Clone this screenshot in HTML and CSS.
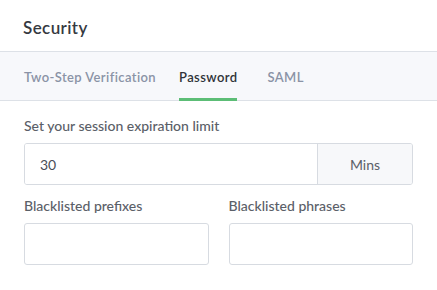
FILE: index.html
```html
<!DOCTYPE html>
<html>
<head>
<meta charset="utf-8">
<link rel="stylesheet" href="styles.css">
</head>
<body>
<div class="page">
  <div class="header"><h1 class="title">Security</h1></div>
  <div class="tabs">
    <div class="tab">Two-Step Verification</div>
    <div class="tab active">Password</div>
    <div class="tab saml">SAML</div>
  </div>
  <div class="content">
    <div class="field">
      <label class="label">Set your session expiration limit</label>
      <div class="input-group">
        <div class="input main">30</div>
        <div class="addon">Mins</div>
      </div>
    </div>
    <div class="row">
      <div class="field">
        <label class="label">Blacklisted prefixes</label>
        <div class="input"></div>
      </div>
      <div class="field">
        <label class="label">Blacklisted phrases</label>
        <div class="input"></div>
      </div>
    </div>
  </div>
</div>
</body>
</html>
```
FILE: styles.css
```css
* { box-sizing: border-box; }
body {
  margin: 0;
  background: #fff;
  font-family: Lato, "Open Sans", sans-serif;
  color: #33373d;
}
.header {
  height: 52px;
  border-bottom: 1px solid #dde1e7;
  padding-left: 23px;
  display: flex;
  align-items: center;
}
.title {
  margin: 3px 0 0 0;
  font-size: 17px;
  font-weight: 600;
  letter-spacing: 0.4px;
  color: #35393f;
}
.tabs {
  height: 49px;
  background: #f7f8fb;
  border-bottom: 1px solid #dde1e7;
  display: flex;
  gap: 23px;
  padding-left: 24px;
}
.tab {
  display: flex;
  align-items: center;
  font-size: 13px;
  font-weight: 600;
  letter-spacing: 0.4px;
  color: #8a93a6;
  border-bottom: 3px solid transparent;
  margin-bottom: -1px;
  padding-top: 3px;
}
.tab.saml { margin-left: 7px; }
.tab.active {
  color: #2f3338;
  border-bottom-color: #5cbd76;
}
.content {
  padding: 17px 24px 0 24px;
  display: flex;
  flex-direction: column;
  gap: 13px;
}
.field {
  display: flex;
  flex-direction: column;
  gap: 9px;
  flex: 1;
}
.label {
  font-size: 14px;
  font-weight: 500;
  color: #5b6068;
  line-height: 16px;
}
.input-group {
  display: flex;
  height: 42px;
  border: 1px solid #d7dbe1;
  border-radius: 3px;
  overflow: hidden;
}
.input {
  height: 42px;
  border: 1px solid #d7dbe1;
  border-radius: 3px;
  font-size: 14px;
  color: #4a4f57;
  padding-left: 15px;
  display: flex;
  align-items: center;
  background: #fff;
}
.input.main {
  flex: 1;
  border: none;
  border-radius: 0;
  height: 40px;
}
.addon {
  width: 95px;
  border-left: 1px solid #d7dbe1;
  background: #f7f8fa;
  display: flex;
  align-items: center;
  justify-content: center;
  font-size: 14px;
  color: #5b6068;
}
.row {
  display: flex;
  gap: 20px;
}
```
